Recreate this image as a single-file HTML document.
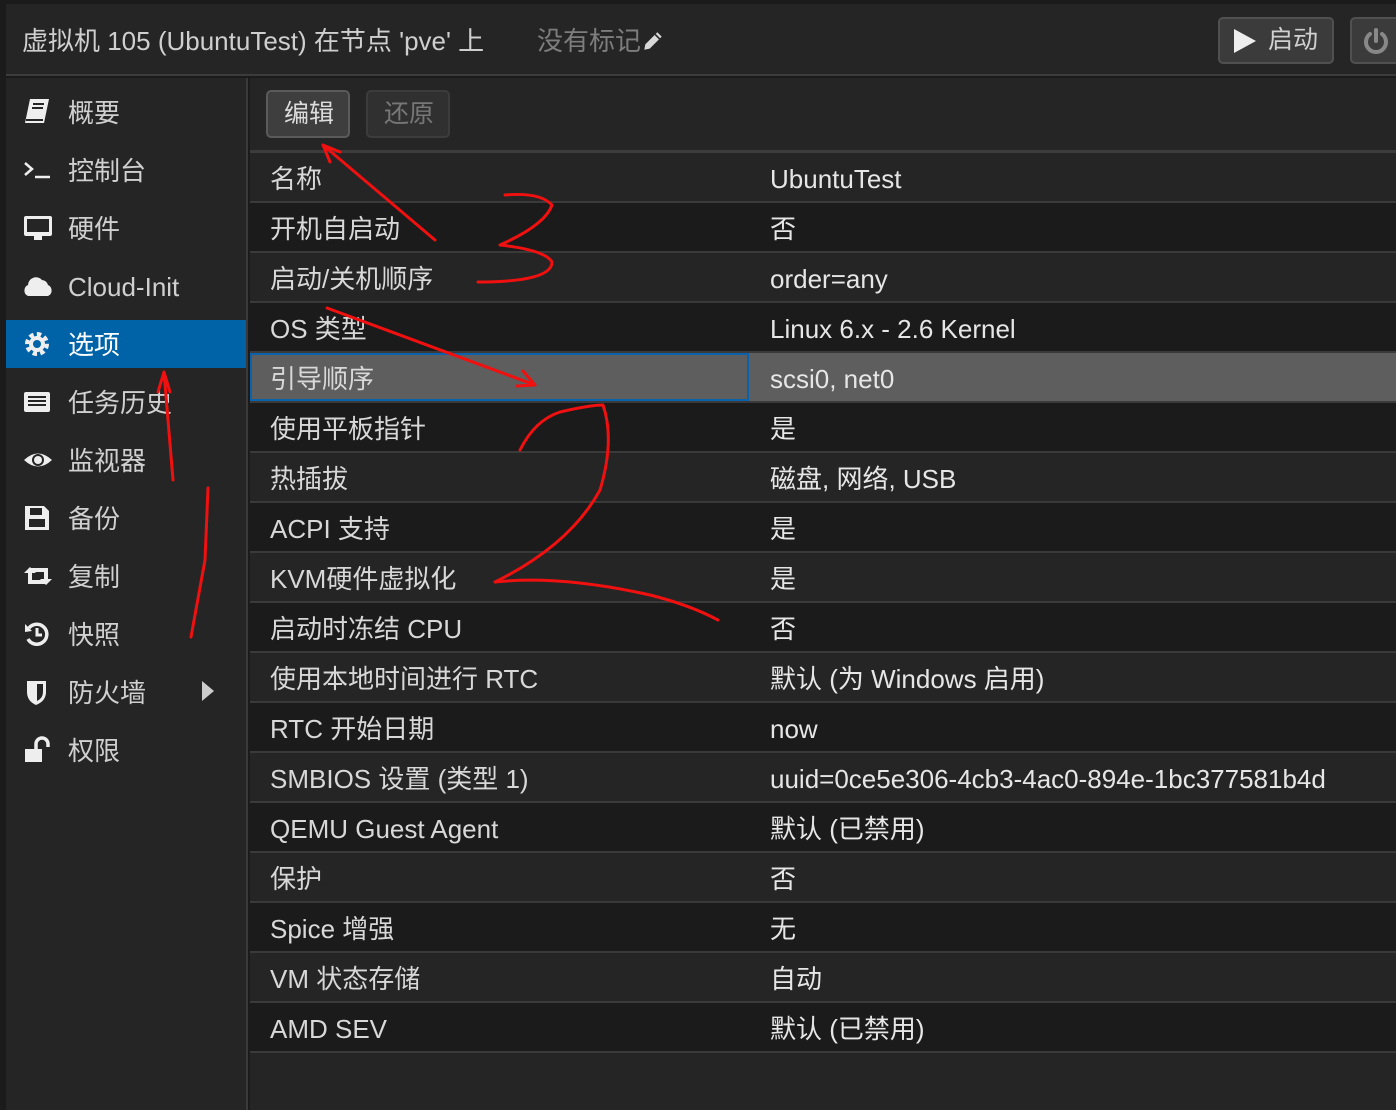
<!DOCTYPE html>
<html><head><meta charset="utf-8">
<style>
*{margin:0;padding:0;box-sizing:border-box}
body{width:1396px;height:1110px;background:#1b1b1b;font-family:"Liberation Sans","Noto Sans CJK SC",sans-serif;color:#e0e0e0;position:relative;overflow:hidden}
.hdr{position:absolute;left:6px;top:4px;width:1390px;height:72px;background:#252525;border-bottom:2px solid #3c3c3c}
.title{position:absolute;left:16px;top:17px;font-size:26px;line-height:40px;color:#cfcfcf;white-space:nowrap}
.tag{position:absolute;left:531px;top:17px;font-size:26px;line-height:40px;color:#7d7d7d;white-space:nowrap}
.btn{position:absolute;background:#3b3b3b;border:2px solid #505050;border-radius:5px}
.side{position:absolute;left:6px;top:78px;width:242px;height:1032px;background:#252525;border-right:2px solid #3a3a3a}
.item{position:absolute;left:0;width:240px;height:48px;font-size:26px;color:#d0d0d0}
.item span{position:absolute;left:62px;top:1px;line-height:48px}
.item svg{position:absolute;left:16px;top:9px}
.main{position:absolute;left:250px;top:78px;width:1146px;height:1032px;background:#252525}
.tb{position:absolute;left:0;top:72px;width:1146px;height:3px;background:#3c3c3c}
.row{position:absolute;left:0;width:1146px;height:50px;border-bottom:2px solid #3a3a3a;font-size:26px;white-space:nowrap}
.row .l{position:absolute;left:20px;top:2px;line-height:48px;color:#d8d8d8}
.row .v{position:absolute;left:520px;top:2px;line-height:48px;color:#e6e6e6}
.d{background:#1b1b1b}.g{background:#252525}
</style></head><body>
<div class="hdr">
<div class="title">虚拟机 105 (UbuntuTest) 在节点 'pve' 上</div>
<div class="tag">没有标记<svg width="24" height="24" viewBox="0 0 22 22" style="vertical-align:-3px"><path d="M3 19 L4 14 L15 3 L19 7 L8 18 Z" fill="#d8d8d8"/><path d="M13 5 L17 9" stroke="#252525" stroke-width="1.5"/></svg></div>
<div class="btn" style="left:1212px;top:13px;width:116px;height:47px"><svg width="26" height="26" style="position:absolute;left:12px;top:9px"><path d="M2 1 L24 13 L2 25Z" fill="#eee"/></svg><span style="position:absolute;left:48px;top:0;line-height:43px;font-size:25px;color:#d0d0d0">启动</span></div>
<div class="btn" style="left:1344px;top:13px;width:60px;height:47px"><svg width="30" height="30" style="position:absolute;left:9px;top:7px" viewBox="0 0 30 30"><path d="M9 8 A10 10 0 1 0 21 8" fill="none" stroke="#888" stroke-width="4" stroke-linecap="round"/><path d="M15 4 V15" stroke="#888" stroke-width="4" stroke-linecap="round"/></svg></div>
</div>
<div class="side">
<div class="item" style="top:10px"><svg width="30" height="30" viewBox="0 0 30 30"><path d="M8 2 H27 L22 26 H3 Z" fill="#eee"/><path d="M11 7H22M10 11H21" stroke="#252525" stroke-width="2"/><path d="M4 23 H21" stroke="#252525" stroke-width="2"/></svg><span>概要</span></div>
<div class="item" style="top:68px"><svg width="30" height="30"><path d="M3 8 L10 14 L3 20" fill="none" stroke="#eee" stroke-width="2.5"/><path d="M13 22 H28" stroke="#eee" stroke-width="2.5"/></svg><span>控制台</span></div>
<div class="item" style="top:126px"><svg width="32" height="30"><rect x="2" y="3" width="28" height="20" rx="2" fill="#eee"/><rect x="5" y="6" width="22" height="13" fill="#252525"/><rect x="12" y="23" width="8" height="4" fill="#eee"/></svg><span>硬件</span></div>
<div class="item" style="top:184px"><svg width="32" height="30"><path d="M6 25 A6 6 0 0 1 6 14 A8 8 0 0 1 20 9 A7 7 0 0 1 26 14 A6 6 0 0 1 26 25 Z" fill="#eee"/></svg><span>Cloud-Init</span></div>
<div class="item" style="top:242px;background:#0063a8"><svg width="30" height="30" viewBox="0 0 30 30"><circle cx="15" cy="15" r="9" fill="none" stroke="#eee" stroke-width="6" stroke-dasharray="4 3"/><circle cx="15" cy="15" r="8" fill="#eee"/><circle cx="15" cy="15" r="4" fill="#0063a8"/></svg><span style="color:#fff">选项</span></div>
<div class="item" style="top:300px"><svg width="30" height="30"><rect x="2" y="5" width="26" height="20" rx="2" fill="#eee"/><path d="M6 10H24M6 14H24M6 18H24" stroke="#252525" stroke-width="2"/></svg><span>任务历史</span></div>
<div class="item" style="top:358px"><svg width="32" height="30"><path d="M2 15 Q16 2 30 15 Q16 28 2 15Z" fill="#eee"/><circle cx="16" cy="15" r="6" fill="#252525"/><circle cx="16" cy="15" r="4" fill="#eee"/></svg><span>监视器</span></div>
<div class="item" style="top:416px"><svg width="30" height="30"><path d="M3 3 H22 L27 8 V27 H3Z" fill="#eee"/><rect x="8" y="5" width="12" height="7" fill="#252525"/><rect x="7" y="16" width="16" height="8" fill="#252525"/></svg><span>备份</span></div>
<div class="item" style="top:474px"><svg width="32" height="30"><path d="M2 12 L8 6 L14 12 H10 V19 H20 L23 23 H6 V12Z M30 18 L24 24 L18 18 H22 V11 H12 L9 7 H26 V18Z" fill="#eee"/></svg><span>复制</span></div>
<div class="item" style="top:532px"><svg width="30" height="30"><path d="M7 9 A10 10 0 1 1 6 20" fill="none" stroke="#eee" stroke-width="3.5"/><path d="M3 5 L10 12 L3 13Z" fill="#eee"/><path d="M15 9V16H20" fill="none" stroke="#eee" stroke-width="3"/></svg><span>快照</span></div>
<div class="item" style="top:590px"><svg width="30" height="30"><path d="M5 4 H24 V15 Q24 24 14 28 Q5 24 5 15Z" fill="#eee"/><path d="M15 7 H21 V15 Q21 21 15 24Z" fill="#252525"/></svg><span>防火墙</span><svg width="14" height="20" style="left:196px;top:13px"><path d="M0 0 L12 10 L0 20Z" fill="#ccc"/></svg></div>
<div class="item" style="top:648px"><svg width="30" height="30"><rect x="3" y="14" width="17" height="13" fill="#eee"/><path d="M14 14 V9 A6 6 0 0 1 26 9 V12" fill="none" stroke="#eee" stroke-width="3.5"/></svg><span>权限</span></div>
</div>
<div class="main">
<div class="btn" style="left:16px;top:12px;width:84px;height:48px;border-color:#5a5a5a;background:#3e3e3e"><span style="position:absolute;left:16px;top:0;line-height:44px;font-size:25px;color:#ddd">编辑</span></div>
<div class="btn" style="left:116px;top:12px;width:84px;height:48px;background:#303030;border-color:#3c3c3c"><span style="position:absolute;left:16px;top:0;line-height:44px;font-size:25px;color:#777">还原</span></div>
<div class="tb"></div>
<div class="row g" style="top:75px"><span class="l">名称</span><span class="v">UbuntuTest</span></div>
<div class="row d" style="top:125px"><span class="l">开机自启动</span><span class="v">否</span></div>
<div class="row g" style="top:175px"><span class="l">启动/关机顺序</span><span class="v">order=any</span></div>
<div class="row d" style="top:225px"><span class="l">OS 类型</span><span class="v">Linux 6.x - 2.6 Kernel</span></div>
<div class="row" style="top:275px;background:#5e5e5e"><div style="position:absolute;left:0;top:0;width:499px;height:48px;border:2px solid #0a62ad"></div><span class="l">引导顺序</span><span class="v">scsi0, net0</span></div>
<div class="row d" style="top:325px"><span class="l">使用平板指针</span><span class="v">是</span></div>
<div class="row g" style="top:375px"><span class="l">热插拔</span><span class="v">磁盘, 网络, USB</span></div>
<div class="row d" style="top:425px"><span class="l">ACPI 支持</span><span class="v">是</span></div>
<div class="row g" style="top:475px"><span class="l">KVM硬件虚拟化</span><span class="v">是</span></div>
<div class="row d" style="top:525px"><span class="l">启动时冻结 CPU</span><span class="v">否</span></div>
<div class="row g" style="top:575px"><span class="l">使用本地时间进行 RTC</span><span class="v">默认 (为 Windows 启用)</span></div>
<div class="row d" style="top:625px"><span class="l">RTC 开始日期</span><span class="v">now</span></div>
<div class="row g" style="top:675px"><span class="l">SMBIOS 设置 (类型 1)</span><span class="v">uuid=0ce5e306-4cb3-4ac0-894e-1bc377581b4d</span></div>
<div class="row d" style="top:725px"><span class="l">QEMU Guest Agent</span><span class="v">默认 (已禁用)</span></div>
<div class="row g" style="top:775px"><span class="l">保护</span><span class="v">否</span></div>
<div class="row d" style="top:825px"><span class="l">Spice 增强</span><span class="v">无</span></div>
<div class="row g" style="top:875px"><span class="l">VM 状态存储</span><span class="v">自动</span></div>
<div class="row d" style="top:925px"><span class="l">AMD SEV</span><span class="v">默认 (已禁用)</span></div>
</div>
<svg width="1396" height="1110" style="position:absolute;left:0;top:0" fill="none" stroke="#f01010" stroke-width="3" stroke-linecap="round" stroke-linejoin="round">
<path d="M435 240 L323 145 M323 145 L340 152 M323 145 L330 162"/>
<path d="M505 195 Q540 192 552 205 Q545 225 500 245 Q545 250 552 262 Q552 282 478 282"/>
<path d="M327 308 L535 385 M535 385 L517 386 M535 385 L523 371"/>
<path d="M520 450 Q535 420 560 412 Q590 405 603 405 Q615 440 600 490 Q570 545 495 582 Q560 575 650 595 Q690 605 718 620"/>
<path d="M173 480 L164 372 M164 372 L158 392 M164 372 L170 392"/>
<path d="M208 488 L205 560 L191 637"/>
</svg>
</body></html>
